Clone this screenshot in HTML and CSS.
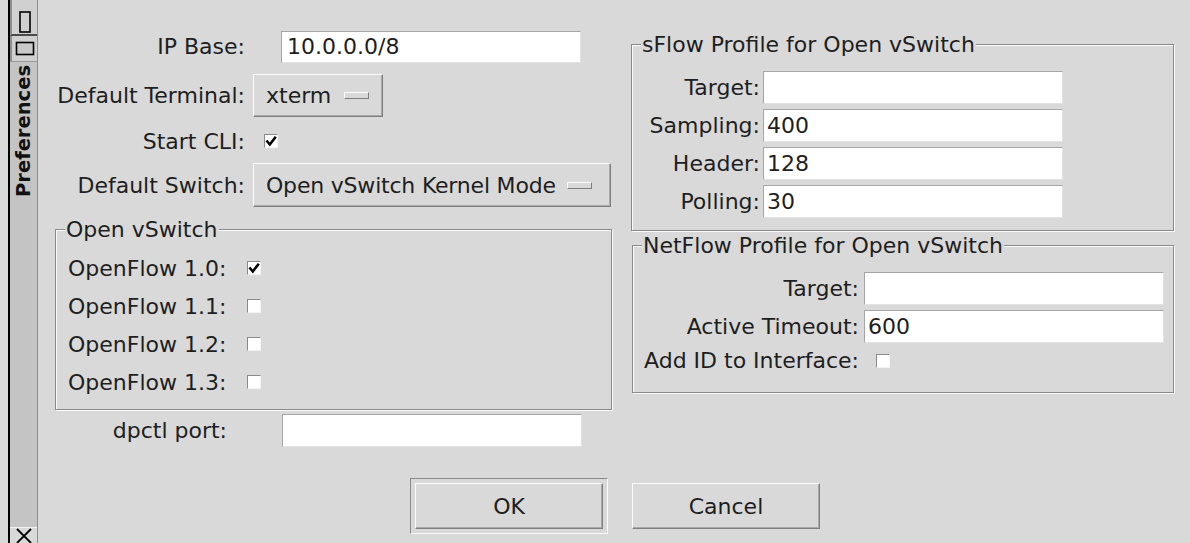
FILE: index.html
```html
<!DOCTYPE html>
<html lang="en">
<head>
<meta charset="utf-8">
<title>Preferences</title>
<link rel="stylesheet" href="styles.css">
</head>
<body>
<div class="window">
  <aside class="dock">
    <div class="dock-btn dock-btn-tall">
      <svg width="14" height="22" viewBox="0 0 14 22"><rect x="2" y="1" width="10" height="20" fill="none" stroke="#000" stroke-width="1.6"/></svg>
    </div>
    <div class="dock-btn dock-btn-wide">
      <svg width="20" height="15" viewBox="0 0 20 15"><rect x="1.5" y="1.5" width="17" height="12" fill="#c9c9c9" stroke="#000" stroke-width="1.6"/></svg>
    </div>
    <div class="dock-title">Preferences</div>
    <div class="dock-fill"></div>
    <div class="dock-close">
      <svg width="18" height="15" viewBox="0 0 18 15"><path d="M2 1 L16 15 M16 1 L2 15" stroke="#000" stroke-width="1.8"/></svg>
    </div>
  </aside>

  <main class="dialog">
    <div class="panes">
      <section class="col-left">
        <div class="row row-ip">
          <label class="lbl">IP Base:</label>
          <div class="entry entry-ip">10.0.0.0/8</div>
        </div>
        <div class="row row-term">
          <label class="lbl">Default Terminal:</label>
          <div class="menubtn menubtn-term"><span>xterm</span><i class="ind"></i></div>
        </div>
        <div class="row row-cli">
          <label class="lbl">Start CLI:</label>
          <span class="check check-cli on"><svg width="12" height="12" viewBox="0 0 12 12"><path d="M1.5 5.5 L4.8 9.5 L10.8 1.8" fill="none" stroke="#000" stroke-width="2.6"/></svg></span>
        </div>
        <div class="row row-switch">
          <label class="lbl">Default Switch:</label>
          <div class="menubtn menubtn-switch"><span class="menu-text">Open vSwitch Kernel Mode</span><i class="ind"></i></div>
        </div>

        <fieldset class="group group-ovs">
          <legend>Open vSwitch</legend>
          <div class="frow"><label class="flbl">OpenFlow 1.0:</label><span class="check on"><svg width="12" height="12" viewBox="0 0 12 12"><path d="M1.5 5.5 L4.8 9.5 L10.8 1.8" fill="none" stroke="#000" stroke-width="2.6"/></svg></span></div>
          <div class="frow"><label class="flbl">OpenFlow 1.1:</label><span class="check"></span></div>
          <div class="frow"><label class="flbl">OpenFlow 1.2:</label><span class="check"></span></div>
          <div class="frow"><label class="flbl">OpenFlow 1.3:</label><span class="check"></span></div>
        </fieldset>

        <div class="row row-dpctl">
          <label class="lbl lbl-dpctl">dpctl port:</label>
          <div class="entry entry-dpctl"></div>
        </div>
      </section>

      <section class="col-right">
        <fieldset class="group group-sflow">
          <legend>sFlow Profile for Open vSwitch</legend>
          <div class="prow"><label class="plbl">Target:</label><div class="entry"></div></div>
          <div class="prow"><label class="plbl">Sampling:</label><div class="entry">400</div></div>
          <div class="prow"><label class="plbl">Header:</label><div class="entry">128</div></div>
          <div class="prow"><label class="plbl">Polling:</label><div class="entry">30</div></div>
        </fieldset>

        <fieldset class="group group-netflow">
          <legend>NetFlow Profile for Open vSwitch</legend>
          <div class="prow"><label class="plbl">Target:</label><div class="entry"></div></div>
          <div class="prow"><label class="plbl">Active Timeout:</label><div class="entry">600</div></div>
          <div class="prow prow-check"><label class="plbl">Add ID to Interface:</label><span class="check"></span></div>
        </fieldset>
      </section>
    </div>

    <div class="actions">
      <div class="default-ring"><button class="btn">OK</button></div>
      <button class="btn">Cancel</button>
    </div>
  </main>
</div>
</body>
</html>
```

FILE: styles.css
```css
* {
  box-sizing: border-box;
}

html,
body {
  margin: 0;
  padding: 0;
}

body {
  width: 1190px;
  height: 543px;
  overflow: hidden;
  background: #d9d9d9;
  font-family: "DejaVu Sans", "Noto Sans", sans-serif;
  font-size: 22px;
  color: #1e1e1e;
}

.window {
  display: flex;
  height: 543px;
  padding-left: 8px;
}

/* ---- side dock with the rotated title ---- */
.dock {
  width: 30px;
  height: 543px;
  border-left: 2px solid #000;
  border-right: 1px solid #8e8e8e;
  background: #c4c4c4;
  display: flex;
  flex-direction: column;
  align-items: stretch;
}

.dock-btn {
  display: flex;
  justify-content: center;
  align-items: center;
  border-left: 2px solid #8e8e8e;
}

.dock-btn-tall {
  height: 36px;
  padding-top: 10px;
  background: #d0d0d0;
  border-bottom: 2px solid #4a4a4a;
}

.dock-btn-wide {
  height: 26px;
  background: #d0d0d0;
  border-bottom: 1px solid #9a9a9a;
}

.dock-title {
  margin-top: 3px;
  writing-mode: vertical-rl;
  transform: rotate(180deg);
  font-weight: bold;
  font-size: 19.5px;
  line-height: 24px;
  align-self: center;
  color: #111;
}

.dock-fill {
  flex: 1;
}

.dock-close {
  height: 16px;
  background: #d9d9d9;
  display: flex;
  justify-content: center;
  align-items: flex-end;
  border-top: 1px solid #f2f2f2;
}

/* ---- dialog body ---- */
.dialog {
  flex: 1;
  padding-left: 16px;
  display: flex;
  flex-direction: column;
}

.panes {
  display: flex;
  gap: 19px;
  height: 450px;
}

.col-left {
  width: 558px;
  padding-top: 29px;
}

.col-right {
  width: 543px;
  padding-top: 32px;
}

.row {
  display: flex;
  align-items: center;
}

.row-ip { height: 35px; }
.row-term { height: 63px; }
.row-cli { height: 28px; }
.row-switch { height: 60px; }
.row-dpctl { height: 37px; margin-top: 2px; }

.lbl {
  width: 199px;
  padding-right: 8px;
  text-align: right;
  white-space: nowrap;
}

.lbl-dpctl {
  width: 181px;
}

/* ---- entries ---- */
.entry {
  width: 300px;
  height: 33px;
  background: #fff;
  border: 1px solid;
  border-color: #a6a6a6 #e2e2e2 #e2e2e2 #a6a6a6;
  padding: 0 3px;
  line-height: 31px;
  white-space: nowrap;
}

.entry-ip {
  height: 32px;
  line-height: 30px;
  margin-left: 28px;
  padding-left: 5px;
}

.entry-dpctl {
  margin-left: 47px;
}

/* ---- menu buttons ---- */
.menubtn {
  display: flex;
  align-items: center;
  justify-content: space-between;
  background: #d9d9d9;
  border: 1px solid;
  border-color: #fcfcfc #7f7f7f #7f7f7f #fcfcfc;
  box-shadow: inset -1px -1px 0 #a9a9a9;
  padding: 0 13px 0 12px;
}

.menubtn-term {
  width: 130px;
  height: 43px;
}

.menubtn-switch {
  width: 358px;
  height: 44px;
  padding-right: 18px;
}

.menu-text {
  letter-spacing: -0.2px;
}

.ind {
  display: block;
  width: 25px;
  height: 7px;
  background: #d9d9d9;
  border: 1px solid;
  border-color: #fcfcfc #7f7f7f #7f7f7f #fcfcfc;
}

/* ---- check boxes ---- */
.check {
  display: inline-flex;
  justify-content: center;
  align-items: center;
  width: 14px;
  height: 14px;
  background: #fff;
  border: 1px solid;
  border-color: #8a8a8a #f4f4f4 #f4f4f4 #8a8a8a;
}

.check-cli {
  margin-left: 11px;
}

/* ---- etched group frames ---- */
.group {
  margin: 0;
  padding: 0;
  border: 1px solid #8a8a8a;
  box-shadow: 1px 1px 0 #fbfbfb, inset 1px 1px 0 #fbfbfb;
}

.group legend {
  margin-left: 9px;
  padding: 0 1px;
  background: #d9d9d9;
  line-height: 25px;
  position: relative;
}

.group-ovs {
  width: 557px;
  margin: 2px 0 0 1px;
  padding: 7px 0 8px 12px;
}

.group-ovs legend {
  margin-left: -3px;
}

.frow {
  display: flex;
  align-items: center;
  height: 38px;
}

.flbl {
  width: 179px;
  white-space: nowrap;
}

.group-sflow {
  width: 543px;
  padding: 11px 0 10px 0;
}

.group-sflow .plbl {
  width: 131px;
}

.group-netflow {
  width: 542px;
  margin: 2px 0 0 1px;
  padding: 11px 0 16px 0;
}

.group-netflow .plbl {
  width: 231px;
  padding-right: 5px;
}

.prow {
  display: flex;
  align-items: center;
  height: 38px;
}

.prow-check {
  height: 31px;
}

.prow-check .check {
  margin-left: 12px;
}

.plbl {
  text-align: right;
  padding-right: 3px;
  white-space: nowrap;
}

/* ---- OK / Cancel ---- */
.actions {
  display: flex;
  align-items: center;
  gap: 24px;
  margin-top: 28px;
  padding-left: 356px;
}

.default-ring {
  padding: 4px;
  border: 1px solid;
  border-color: #8a8a8a #fbfbfb #fbfbfb #8a8a8a;
}

.btn {
  width: 188px;
  height: 46px;
  margin: 0;
  padding: 0;
  font: inherit;
  color: #1e1e1e;
  background: #d9d9d9;
  border: 1px solid;
  border-color: #fcfcfc #7f7f7f #7f7f7f #fcfcfc;
  box-shadow: inset -1px -1px 0 #a9a9a9;
}
```
